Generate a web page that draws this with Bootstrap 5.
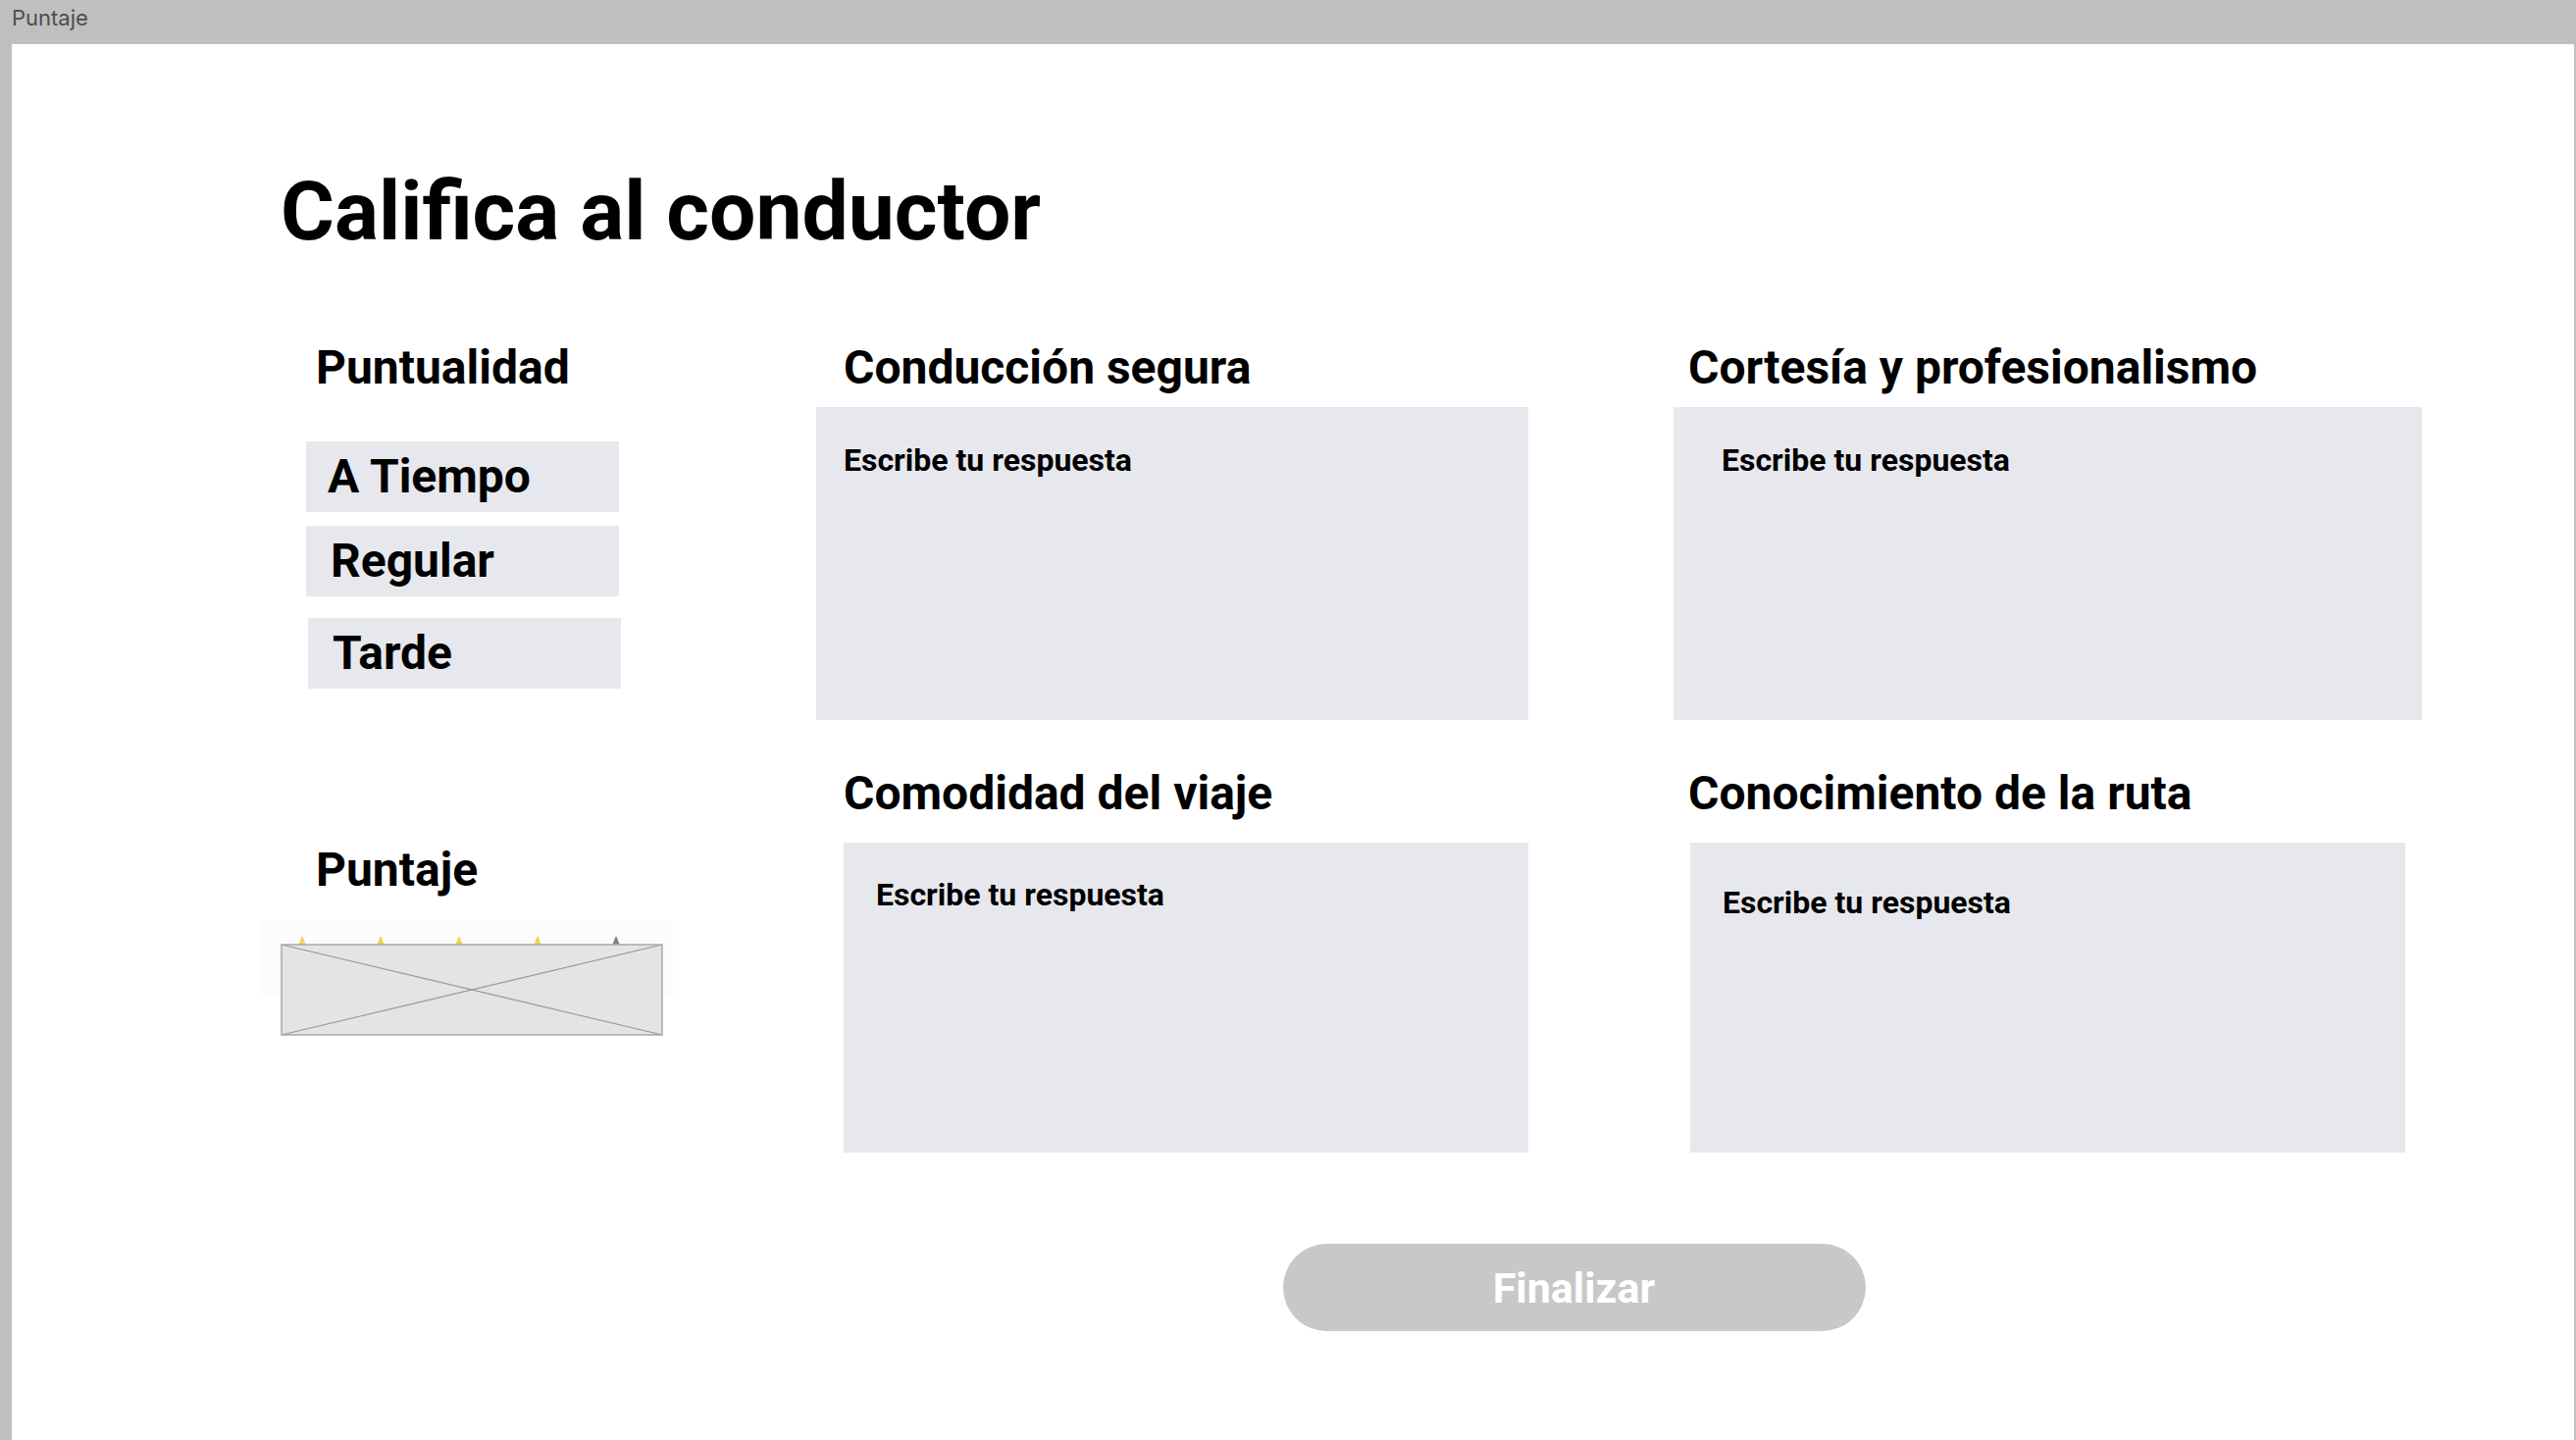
<!DOCTYPE html>
<html lang="es">
<head>
<meta charset="utf-8">
<meta name="viewport" content="width=device-width, initial-scale=1">
<title>Puntaje</title>
<link href="https://cdn.jsdelivr.net/npm/bootstrap@5.3.0/dist/css/bootstrap.min.css" rel="stylesheet">
<style>
  body { background: #bfbfbf; color: #000; font-family: Roboto, sans-serif; }
  .frame-name { font: 400 22px/26px Inter, sans-serif; color: #4d4d4d; padding: 5px 12px 14px; }
  .frame { background: #fff; margin: 0 2px 0 12px; padding: 121px 155px 80px 274px; }
  .page-title { font-size: 84px; line-height: 100px; font-weight: 700; margin-bottom: 81px; }
  .section-title { font-size: 48px; line-height: 56px; font-weight: 700; margin: 0; display: block; }
  .survey { display: grid; grid-template-columns: 398px minmax(0, 726fr) minmax(0, 763fr); column-gap: 148px; }
  .side-title { padding-left: 36px; }
  .options { margin: 47px 0 157px 26px; }
  .options .btn { width: 319px; padding: 8px 25px; border: 0; border-radius: 0; background: #e7e8ed; color: #000;
    font-size: 48px; line-height: 56px; font-weight: 700; text-align: left; }
  .options .on-time { padding-left: 22px; }
  .options .regular { margin: 14px 0 22px; }
  .options .late { margin-left: 2px; }
  .score-art { display: block; margin: 23px 0 0 -21px; }
  .answer { display: block; border: 0; border-radius: 0; background: #e7e8ed; color: #000; resize: none;
    font-size: 32px; line-height: 38px; font-weight: 700; }
  .answer:focus { background: #e7e8ed; }
  .answer::placeholder { color: #000; opacity: 1; }
  .first-answer { height: 319px; margin: 12px 0 47px; padding: 35px 28px; }
  .second-answer { height: 316px; margin-top: 22px; padding: 34px 33px; }
  .col-left .section-title { padding-left: 28px; }
  .col-left .second-answer { margin-left: 28px; width: calc(100% - 28px); }
  .col-right .section-title { padding-left: 15px; }
  .col-right .first-answer { padding-left: 49px; }
  .col-right .second-answer { margin-left: 17px; width: calc(100% - 34px); padding-top: 42px; }
  .actions { grid-column: 2 / 4; padding: 93px 92px 0 0; }
  .finish { width: 594px; height: 89px; border: 0; background: #c8c8c8; color: #fff; font-size: 43px; line-height: 50px; font-weight: 700; }
</style>
<script src="https://cdn.jsdelivr.net/npm/bootstrap@5.3.0/dist/js/bootstrap.bundle.min.js"></script>
</head>
<body class="d-flex flex-column min-vh-100">
<header class="frame-name">Puntaje</header>
<main class="frame flex-grow-1">
  <h1 class="page-title">Califica al conductor</h1>
  <form class="survey">
    <div>
      <h2 class="section-title side-title" id="punctuality">Puntualidad</h2>
      <div class="options d-flex flex-column align-items-start" role="radiogroup" aria-labelledby="punctuality">
        <input class="btn-check" type="radio" name="punctuality" id="onTime">
        <label class="btn on-time" for="onTime">A Tiempo</label>
        <input class="btn-check" type="radio" name="punctuality" id="regular">
        <label class="btn regular" for="regular">Regular</label>
        <input class="btn-check" type="radio" name="punctuality" id="late">
        <label class="btn late" for="late">Tarde</label>
      </div>
      <h2 class="section-title side-title">Puntaje</h2>
      <svg class="score-art" width="422" height="119" viewBox="0 0 422 119" role="img" aria-label="Puntaje">
        <rect x="0" y="0" width="421" height="78" fill="#fcfcfc"/>
        <g fill="#f8cf5a">
          <path d="M42 18q1-3 2 0l3 8h-8z"/><path d="M122 18q1-3 2 0l3 8h-8z"/>
          <path d="M202 18q1-3 2 0l3 8h-8z"/><path d="M282 18q1-3 2 0l3 8h-8z"/>
          <path d="M20 35l4-1v4z"/>
        </g>
        <path d="M362 18q1-3 2 0l3 8h-8z" fill="#78828a"/>
        <rect x="22" y="25" width="388" height="92" fill="#e4e4e4"/>
        <path d="M22 25L410 117M22 117L410 25" stroke="#979797" stroke-width="1.2"/>
        <rect x="22" y="25" width="388" height="92" fill="none" stroke="#a8a8a8" stroke-width="1.5"/>
      </svg>
    </div>
    <div class="col-left">
      <label class="section-title" for="driving">Conducción segura</label>
      <textarea class="form-control answer first-answer" id="driving" placeholder="Escribe tu respuesta"></textarea>
      <label class="section-title" for="comfort">Comodidad del viaje</label>
      <textarea class="form-control answer second-answer" id="comfort" placeholder="Escribe tu respuesta"></textarea>
    </div>
    <div class="col-right">
      <label class="section-title" for="courtesy">Cortesía y profesionalismo</label>
      <textarea class="form-control answer first-answer" id="courtesy" placeholder="Escribe tu respuesta"></textarea>
      <label class="section-title" for="route">Conocimiento de la ruta</label>
      <textarea class="form-control answer second-answer" id="route" placeholder="Escribe tu respuesta"></textarea>
    </div>
    <div class="actions d-flex justify-content-center">
      <button type="button" class="btn rounded-pill finish">Finalizar</button>
    </div>
  </form>
</main>
</body>
</html>
